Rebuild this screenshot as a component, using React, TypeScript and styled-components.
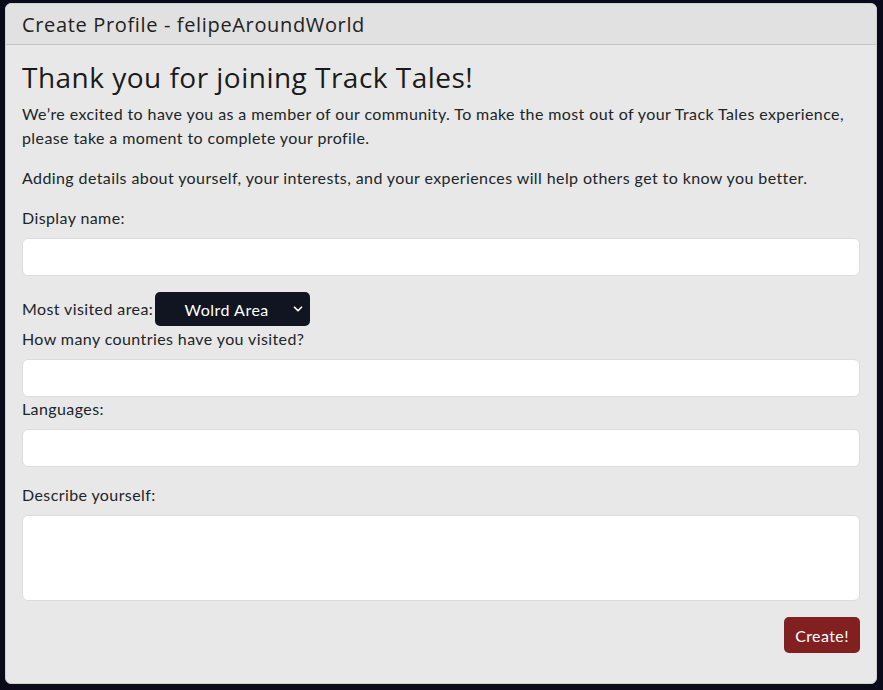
import React from "react";
import styled, { createGlobalStyle } from "styled-components";
import { ChevronDown } from "lucide-react";

const Global = createGlobalStyle`
  html, body { margin: 0; padding: 0; background: #0b0a1b; }
  body { font-family: Lato, "Noto Sans", sans-serif; color: #212529; letter-spacing: 0.4px; }
  * { box-sizing: border-box; }
`;

const Page = styled.div`
  padding: 3px 6px 6px 5px;
  height: 690px;
`;

const Card = styled.div`
  height: 681px;
  background: #e8e8e8;
  border: 1px solid #d0d0d0;
  border-radius: 6px;
  overflow: hidden;
  display: flex;
  flex-direction: column;
`;

const Header = styled.div`
  height: 41px;
  background: #e1e1e1;
  border-bottom: 1px solid #c4c4c4;
  padding: 0 16px;
  display: flex;
  align-items: center;
  font-family: "Open Sans", sans-serif;
  font-size: 20px;
  letter-spacing: 0.65px;
  color: #222;
`;

const Body = styled.div`
  padding: 15px 16px 16px;
  display: flex;
  flex-direction: column;
`;

const Title = styled.h1`
  margin: 0 0 8px;
  font-family: "Open Sans", sans-serif;
  font-weight: 400;
  font-size: 28px;
  letter-spacing: 0.48px;
  line-height: 34px;
  color: #1a1a1a;
`;

const Para = styled.p`
  margin: 0 0 16px;
  font-size: 16px;
  line-height: 24px;
`;

const Label = styled.label<{ $top?: number }>`
  display: block;
  font-size: 16px;
  line-height: 24px;
  margin-top: ${(p) => p.$top ?? 0}px;
`;

const Input = styled.input`
  display: block;
  width: 100%;
  height: 38px;
  margin-top: 8px;
  background: #fff;
  border: 1px solid #dcdcdc;
  border-radius: 6px;
  font: inherit;
  padding: 6px 12px;
`;

const TextArea = styled.textarea`
  display: block;
  width: 100%;
  height: 86px;
  margin-top: 8px;
  background: #fff;
  border: 1px solid #dcdcdc;
  border-radius: 6px;
  font: inherit;
  padding: 6px 12px;
  resize: none;
`;

const AreaRow = styled.div`
  display: flex;
  align-items: center;
  gap: 2px;
  margin: 16px 0 1px;
`;

const SelectWrap = styled.div`
  position: relative;
  width: 155px;
  height: 34px;
`;

const Select = styled.select`
  appearance: none;
  width: 100%;
  height: 100%;
  background: #111522;
  color: #fff;
  border: none;
  border-radius: 5px;
  font-family: Lato, "Noto Sans", sans-serif;
  font-size: 16px;
  letter-spacing: 0.5px;
  text-align: center;
  text-align-last: center;
  padding: 0 12px 0 0;
`;

const Chevron = styled(ChevronDown)`
  position: absolute;
  right: 5px;
  top: 10px;
  color: #fff;
  pointer-events: none;
`;

const Actions = styled.div`
  display: flex;
  justify-content: flex-end;
  margin-top: 16px;
`;

const Button = styled.button`
  height: 36px;
  width: 76px;
  padding: 0;
  background: #821f20;
  color: #fff;
  border: none;
  border-radius: 5px;
  font-family: Lato, "Noto Sans", sans-serif;
  font-size: 16px;
  letter-spacing: 0.4px;
`;

export default function App() {
  return (
    <>
      <Global />
      <Page>
        <Card>
          <Header>Create Profile - felipeAroundWorld</Header>
          <Body>
            <Title>Thank you for joining Track Tales!</Title>
            <Para>
              We’re excited to have you as a member of our community. To make the most out of your Track Tales
              experience, please take a moment to complete your profile.
            </Para>
            <Para>
              Adding details about yourself, your interests, and your experiences will help others get to know you
              better.
            </Para>
            <Label>Display name:</Label>
            <Input />
            <AreaRow>
              <Label>Most visited area:</Label>
              <SelectWrap>
                <Select defaultValue="world">
                  <option value="world">Wolrd Area</option>
                </Select>
                <Chevron size={14} strokeWidth={3} />
              </SelectWrap>
            </AreaRow>
            <Label>How many countries have you visited?</Label>
            <Input />
            <Label>Languages:</Label>
            <Input />
            <Label $top={16}>Describe yourself:</Label>
            <TextArea />
            <Actions>
              <Button>Create!</Button>
            </Actions>
          </Body>
        </Card>
      </Page>
    </>
  );
}
